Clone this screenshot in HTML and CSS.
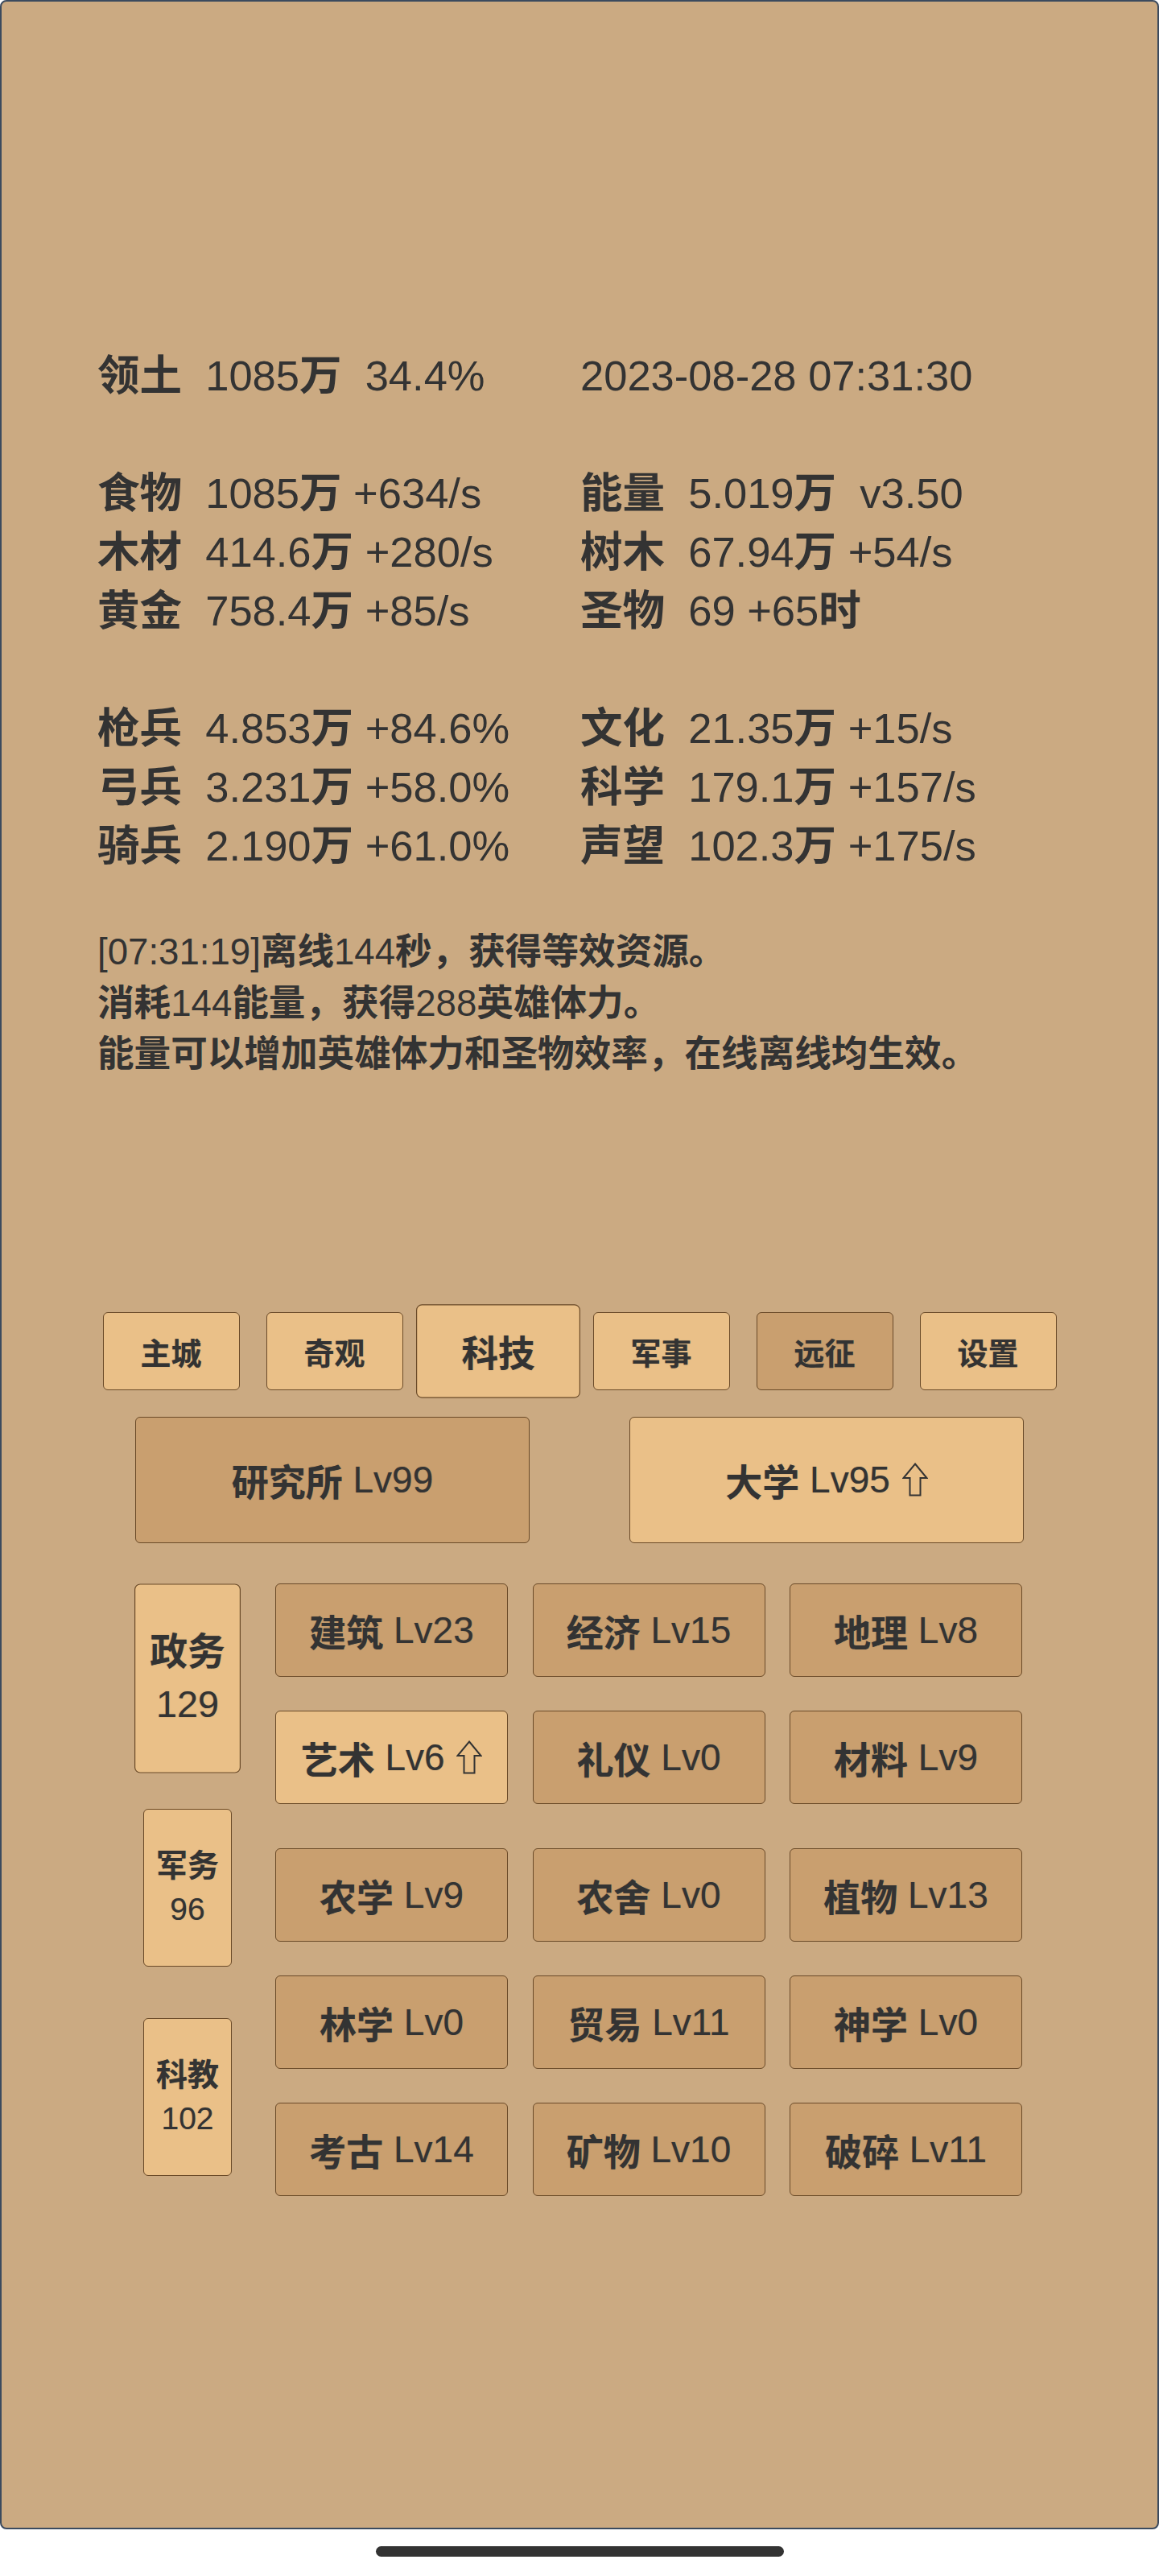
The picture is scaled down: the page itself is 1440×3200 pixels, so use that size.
FILE: index.html
```html
<!DOCTYPE html>
<html lang="zh-CN">
<head>
    <meta charset="UTF-8">
    <meta name="viewport" content="width=device-width, initial-scale=1.0">
    <title>科技</title>
    <link rel="stylesheet" href="styles.css">
</head>
<body>
    <div class="screen">
        <!-- resource overview -->
        <div class="stats">
            <div class="stat"><b>领土</b>  1085<b>万</b>  34.4%</div>
            <div class="stat">2023-08-28 07:31:30</div>
            <div class="stat"></div>
            <div class="stat"></div>
            <div class="stat"><b>食物</b>  1085<b>万</b> +634/s</div>
            <div class="stat"><b>能量</b>  5.019<b>万</b>  v3.50</div>
            <div class="stat"><b>木材</b>  414.6<b>万</b> +280/s</div>
            <div class="stat"><b>树木</b>  67.94<b>万</b> +54/s</div>
            <div class="stat"><b>黄金</b>  758.4<b>万</b> +85/s</div>
            <div class="stat"><b>圣物</b>  69 +65<b>时</b></div>
            <div class="stat"></div>
            <div class="stat"></div>
            <div class="stat"><b>枪兵</b>  4.853<b>万</b> +84.6%</div>
            <div class="stat"><b>文化</b>  21.35<b>万</b> +15/s</div>
            <div class="stat"><b>弓兵</b>  3.231<b>万</b> +58.0%</div>
            <div class="stat"><b>科学</b>  179.1<b>万</b> +157/s</div>
            <div class="stat"><b>骑兵</b>  2.190<b>万</b> +61.0%</div>
            <div class="stat"><b>声望</b>  102.3<b>万</b> +175/s</div>
        </div>

        <div class="log">
            <div>[07:31:19]<b>离线</b>144<b>秒，获得等效资源。</b></div>
            <div><b>消耗</b>144<b>能量，获得</b>288<b>英雄体力。</b></div>
            <div><b>能量可以增加英雄体力和圣物效率，在线离线均生效。</b></div>
        </div>

        <!-- main tabs -->
        <div class="tabs">
            <div class="btn tab"><b>主城</b></div>
            <div class="btn tab"><b>奇观</b></div>
            <div class="btn tab active"><b>科技</b></div>
            <div class="btn tab"><b>军事</b></div>
            <div class="btn tab dark"><b>远征</b></div>
            <div class="btn tab"><b>设置</b></div>
        </div>

        <div class="halls">
            <div class="btn hall dark"><b>研究所</b> Lv99</div>
            <div class="btn hall"><b>大学</b> Lv95 <svg class="up" viewBox="0 0 32 42"><path d="M16 1.5 L30.5 19 H22.5 V40.5 H9.5 V19 H1.5 Z"/></svg></div>
        </div>

        <div class="tech">
            <div class="sections">
                <div class="btn section active"><b>政务</b><span>129</span></div>
                <div class="btn section"><b>军务</b><span>96</span></div>
                <div class="btn section"><b>科教</b><span>102</span></div>
            </div>
            <div class="tech-grid">
                <div class="btn item dark"><b>建筑</b> Lv23</div>
                <div class="btn item dark"><b>经济</b> Lv15</div>
                <div class="btn item dark"><b>地理</b> Lv8</div>
                <div class="btn item"><b>艺术</b> Lv6 <svg class="up" viewBox="0 0 32 42"><path d="M16 1.5 L30.5 19 H22.5 V40.5 H9.5 V19 H1.5 Z"/></svg></div>
                <div class="btn item dark"><b>礼仪</b> Lv0</div>
                <div class="btn item dark"><b>材料</b> Lv9</div>
                <div class="btn item dark group"><b>农学</b> Lv9</div>
                <div class="btn item dark group"><b>农舍</b> Lv0</div>
                <div class="btn item dark group"><b>植物</b> Lv13</div>
                <div class="btn item dark"><b>林学</b> Lv0</div>
                <div class="btn item dark"><b>贸易</b> Lv11</div>
                <div class="btn item dark"><b>神学</b> Lv0</div>
                <div class="btn item dark"><b>考古</b> Lv14</div>
                <div class="btn item dark"><b>矿物</b> Lv10</div>
                <div class="btn item dark"><b>破碎</b> Lv11</div>
            </div>
        </div>
    </div>
    <div class="home-bar"></div>
</body>
</html>
```

FILE: styles.css
```css
:root {
    --page-bg: #cbaa82;
    --btn-light: #eac088;
    --btn-dark: #c99f6f;
    --btn-border: #6a4a28;
    --frame: #3b4a5e;
    --text: #333333;
}

body {
    margin: 0;
    background: #ffffff;
    font-family: "Liberation Sans", "Noto Sans CJK SC", sans-serif;
    color: var(--text);
}

b {
    font-weight: bold;
}

.screen {
    box-sizing: border-box;
    height: 3142px;
    padding-top: 428px;
    background: var(--page-bg);
    border: 2px solid var(--frame);
    border-radius: 8px;
}

/* resource stats */
.stats {
    display: grid;
    grid-template-columns: 600px 1fr;
    grid-auto-rows: 73px;
    padding-left: 119px;
    font-size: 52.5px;
    line-height: 73px;
}

.stat {
    white-space: pre;
}

.log {
    margin-top: 64px;
    padding-left: 119px;
    font-size: 45.6px;
    line-height: 63.5px;
}

/* buttons */
.btn {
    box-sizing: border-box;
    display: flex;
    align-items: center;
    justify-content: center;
    background: var(--btn-light);
    border: 1px solid var(--btn-border);
    border-radius: 6px;
    text-shadow: 0 0 1px rgba(51, 51, 51, 0.4);
}

.btn.dark {
    background: var(--btn-dark);
}

.btn.active {
    transform: scale(1.2);
}

.tabs {
    display: flex;
    justify-content: center;
    margin-top: 288px;
}

.tab {
    width: 170px;
    height: 97px;
    margin: 0 16.5px;
    font-size: 38px;
}

.halls {
    display: flex;
    justify-content: center;
    gap: 124px;
    margin-top: 33px;
}

.hall {
    width: 490px;
    height: 157px;
    font-size: 46px;
    white-space: pre;
}

/* outlined upgrade arrow */
.up {
    width: 32px;
    height: 44px;
    margin-left: 2px;
    fill: none;
    stroke: var(--text);
    stroke-width: 2;
    stroke-linejoin: miter;
}

.tech {
    display: flex;
    align-items: flex-start;
    margin-top: 50px;
    padding-left: 176px;
}

.sections {
    display: flex;
    flex-direction: column;
    gap: 64px;
    width: 110px;
    padding-top: 20px;
}

.section {
    height: 196px;
    flex-direction: column;
    font-size: 39px;
    line-height: 54px;
}

.tech-grid {
    display: grid;
    grid-template-columns: repeat(3, 289px);
    column-gap: 30.5px;
    row-gap: 42px;
    margin-left: 54px;
}

.item {
    height: 116px;
    font-size: 46px;
    white-space: pre;
}

.item.group {
    margin-top: 13px;
}

.home-bar {
    width: 507px;
    height: 13px;
    margin: 21px auto 0;
    border-radius: 7px;
    background: #333333;
}
```
